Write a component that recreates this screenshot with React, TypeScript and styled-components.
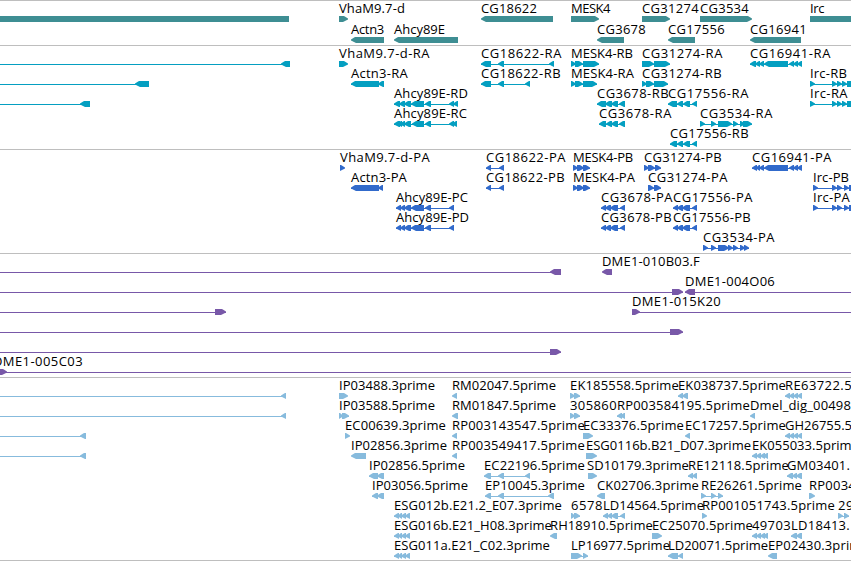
import { useLayoutEffect, useRef } from "react";
import styled, { createGlobalStyle } from "styled-components";

type Direction = "<" | ">" | "-";

interface Feature {
  name?: string;
  // left and right edge of the label
  label?: [number, number];
  dir: Direction;
  // "start-end" pairs, separated by spaces
  exons: string;
  // thin line that runs past the exons
  line?: [number, number];
}

interface TrackData {
  id: string;
  color: string;
  rowHeight: number;
  bottom: number;
  rows: Feature[][];
}

const WIDTH = 851;

const f = (
  name: string,
  start: number,
  end: number,
  dir: Direction,
  exons: string,
  line?: [number, number]
): Feature => ({ name, label: [start, end], dir, exons, line });

const bare = (
  dir: Direction,
  exons: string,
  line?: [number, number]
): Feature => ({ dir, exons, line });

const IRC_R = "810-815 832-837 837-842 842-847 847-856";
const IRC_P = "813-818 832-837 837-842 844-849 849-856";
const AHCY_P = "396-401 400-405 404-411 411-424 425-431 449-454";
const CG3678_P = "601-606 605-611 610-618 620-625";
const CG17556_P = "673-678 677-683 682-690 692-697";
const CG16941_TAIL = "764-788 789-794 793-798 797-802";
const ESG = "394-399 398-402 401-406 405-410";

const tracks: TrackData[] = [
  {
    id: "gene",
    color: "#3e8e93",
    rowHeight: 21,
    bottom: 2,
    rows: [
      [
        bare("-", "0-289"),
        f("VhaM9.7-d", 339, 405, ">", "339-348"),
        f("CG18622", 481, 537, "<", "481-553"),
        f("MESK4", 571, 610, ">", "571-599"),
        f("CG31274", 642, 699, ">", "642-670"),
        f("CG3534", 700, 749, ">", "700-752"),
        f("Irc", 810, 824, "-", "810-851"),
      ],
      [
        f("Actn3", 351, 384, "<", "351-384"),
        f("Ahcy89E", 394, 445, "<", "394-458"),
        f("CG3678", 597, 646, "<", "597-624"),
        f("CG17556", 668, 725, "<", "668-695"),
        f("CG16941", 750, 807, "<", "750-801"),
      ],
    ],
  },
  {
    id: "transcript",
    color: "#049fc1",
    rowHeight: 20,
    bottom: 3,
    rows: [
      [
        bare("<", "281-290", [0, 290]),
        f("VhaM9.7-d-RA", 339, 430, ">", "339-348"),
        f("CG18622-RA", 481, 562, "<", "481-491 498-504 549-554"),
        f("MESK4-RB", 571, 633, ">", "571-576 575-583 583-599"),
        f("CG31274-RA", 642, 723, ">", "642-654 654-670"),
        f("CG16941-RA", 750, 831, "<", `750-756 755-760 759-764 ${CG16941_TAIL}`),
      ],
      [
        bare("<", "135-149", [0, 149]),
        f("Actn3-RA", 351, 408, "<", "351-379 378-384"),
        f("CG18622-RB", 481, 561, "<", "481-491 498-504 525-530"),
        f("MESK4-RA", 571, 634, ">", "571-576 575-583 583-597"),
        f("CG31274-RB", 642, 722, ">", "642-647 646-654 654-668"),
        f("Irc-RB", 810, 847, ">", IRC_R),
      ],
      [
        bare("<", "80-90", [0, 90]),
        f("Ahcy89E-RD", 394, 468, "<", "394-400 399-405 404-411 411-424 425-431 449-454 453-458"),
        f("CG3678-RB", 597, 669, "<", "597-606 605-612 611-618 619-625"),
        f("CG17556-RA", 668, 749, "<", "668-677 677-683 683-690 692-697"),
        f("Irc-RA", 810, 848, ">", IRC_R),
      ],
      [
        f("Ahcy89E-RC", 394, 467, "<", "394-400 397-402 400-405 404-411 412-424 425-431 449-454 452-457"),
        f("CG3678-RA", 599, 672, "<", "599-606 606-612 611-618 619-625"),
        f("CG3534-RA", 700, 773, ">", "700-705 711-716 718-732 733-738 740-745 743-752"),
      ],
      [f("CG17556-RB", 670, 749, "<", "670-677 677-683 683-690 692-697")],
    ],
  },
  {
    id: "cds",
    color: "#316acb",
    rowHeight: 20,
    bottom: 3,
    rows: [
      [
        f("VhaM9.7-d-PA", 340, 430, ">", "340-345"),
        f("CG18622-PA", 486, 566, "<", "486-491 499-504"),
        f("MESK4-PB", 573, 633, ">", "573-578 577-584 583-590"),
        f("CG31274-PB", 644, 722, ">", "644-649 648-655 655-661"),
        f("CG16941-PA", 752, 832, "<", `752-757 756-760 759-764 ${CG16941_TAIL}`),
      ],
      [
        f("Actn3-PA", 351, 407, "<", "351-379 378-383"),
        f("CG18622-PB", 486, 565, "<", "486-491 499-504"),
        f("MESK4-PA", 573, 635, ">", "573-578 577-584 583-590"),
        f("CG31274-PA", 648, 728, ">", "648-654 654-661"),
        f("Irc-PB", 813, 849, ">", IRC_P),
      ],
      [
        f("Ahcy89E-PC", 396, 468, "<", AHCY_P),
        f("CG3678-PA", 601, 673, "<", CG3678_P),
        f("CG17556-PA", 673, 753, "<", CG17556_P),
        f("Irc-PA", 813, 850, ">", IRC_P),
      ],
      [
        f("Ahcy89E-PD", 396, 469, "<", AHCY_P),
        f("CG3678-PB", 601, 672, "<", CG3678_P),
        f("CG17556-PB", 673, 751, "<", CG17556_P),
      ],
      [f("CG3534-PA", 703, 775, ">", "703-708 711-716 718-729 728-733 733-738 740-745 744-749")],
    ],
  },
  {
    id: "bac",
    color: "#7858a8",
    rowHeight: 20,
    bottom: 3,
    rows: [
      [
        bare("<", "550-561", [0, 561]),
        f("DME1-010B03.F", 602, 700, "<", "602-612"),
      ],
      [
        bare(">", "672-683", [0, 683]),
        f("DME1-004O06", 685, 775, "<", "685-695", [685, WIDTH]),
      ],
      [
        bare(">", "215-226", [0, 226]),
        f("DME1-015K20", 632, 721, ">", "632-640", [632, WIDTH]),
      ],
      [bare(">", "670-683", [0, 683])],
      [bare(">", "550-561", [0, 561])],
      [f("DME1-005C03", -7, 83, ">", "-5-7", [0, WIDTH])],
    ],
  },
  {
    id: "est",
    color: "#87bbdd",
    rowHeight: 20,
    bottom: 2,
    rows: [
      [
        bare("<", "281-286", [0, 286]),
        f("IP03488.3prime", 339, 435, ">", "339-348"),
        f("RM02047.5prime", 452, 556, "<", "452-457"),
        f("EK185558.5prime", 570, 679, ">", "570-575 574-580"),
        f("EK038737.5prime", 678, 786, "<", "678-683 682-688"),
        f("RE63722.5", 785, 852, "<", "785-790 789-794 793-798 797-802"),
      ],
      [
        bare("<", "281-286", [0, 286]),
        f("IP03588.5prime", 339, 435, ">", "339-343 342-349"),
        f("RM01847.5prime", 452, 556, "<", "452-458"),
        f("305860", 570, 617, ">", "570-575 574-580"),
        f("RP003584195.5prime", 617, 750, "<", "617-622 620-625"),
        f("Dmel_dig_00498", 750, 851, "<", "750-755"),
      ],
      [
        bare("<", "80-86", [0, 86]),
        f("EC00639.3prime", 345, 446, ">", "345-350"),
        f("RP003143547.5prime", 452, 585, "<", "452-457"),
        f("EC33376.5prime", 583, 684, ">", "583-593"),
        f("EC17257.5prime", 685, 786, "<", "685-690"),
        f("GH26755.5", 785, 852, "<", "785-790 789-794 793-798 797-802"),
      ],
      [
        bare("<", "80-86", [0, 86]),
        f("IP02856.3prime", 351, 447, "<", "351-366"),
        f("RP003549417.5prime", 452, 585, "<", "452-457"),
        f("ESG0116b.B21_D07.3prime", 586, 751, ">", "586-597"),
        f("EK055033.5prime", 752, 859, "<", "752-757 756-761 760-765 763-768"),
      ],
      [
        f("IP02856.5prime", 369, 465, "<", "369-378 377-384"),
        f("EC22196.5prime", 484, 585, "<", "484-491 498-504 525-530"),
        f("SD10179.3prime", 587, 689, ">", "588-597"),
        f("RE12118.5prime", 688, 789, "<", "688-693 692-697"),
        f("GM03401.", 787, 850, "<", "787-793 792-797 796-802"),
      ],
      [
        f("IP03056.5prime", 372, 468, "<", "372-378 377-384"),
        f("EP10045.3prime", 485, 585, "<", "485-491 498-504 548-554"),
        f("CK02706.3prime", 597, 699, "<", "597-605"),
        f("RE26261.5prime", 701, 802, ">", "701-706 711-716 718-723"),
        f("RP0034", 809, 856, ">", "809-815"),
      ],
      [
        f("ESG012b.E21.2_E07.3prime", 394, 562, "<", ESG),
        f("6578", 571, 603, ">", "571-575 574-580"),
        f("LD14564.5prime", 603, 704, "<", "603-608 607-612 611-618 620-625"),
        f("RP001051743.5prime", 702, 835, ">", "702-707"),
        f("29", 838, 854, ">", "838-843 844-849"),
      ],
      [
        f("ESG016b.E21_H08.3prime", 394, 552, "<", ESG),
        f("RH18910.5prime", 550, 653, "<", "550-557"),
        f("EC25070.5prime", 652, 753, ">", "652-662"),
        f("49703", 752, 791, "<", "752-757 756-761 760-765 763-768"),
        f("LD18413.", 791, 850, "<", "791-797 796-802"),
      ],
      [
        f("ESG011a.E21_C02.3prime", 394, 550, "<", ESG),
        f("LP16977.5prime", 571, 670, ">", "571-582 583-588"),
        f("LD20071.5prime", 668, 768, "<", "668-678 678-683"),
        f("EP02430.3prime", 768, 869, "<", "768-777"),
      ],
    ],
  },
];

const GlobalStyle = createGlobalStyle`
  body {
    margin: 0;
    background: #fff;
    overflow: hidden;
  }
`;

const StyledBrowser = styled.main`
  width: ${WIDTH}px;
  height: 561px;
  overflow: hidden;
  border-bottom: 1px solid #bebebe;
  box-sizing: border-box;
  background: #fff;
`;

const StyledTrack = styled.section<{ $color: string; $bottom: number }>`
  border-top: 1px solid #bebebe;
  padding-bottom: ${({ $bottom }) => $bottom}px;
  color: ${({ $color }) => $color};
`;

const StyledRow = styled.div<{ $height: number }>`
  display: flex;
  flex-direction: column;
  height: ${({ $height }) => $height}px;
`;

const StyledLabels = styled.div`
  position: relative;
  flex: 0 0 15px;
`;

const StyledLabel = styled.span<{ $x: number }>`
  position: absolute;
  top: 0;
  left: ${({ $x }) => $x}px;
  font-family: "Open Sans", "Liberation Sans", sans-serif;
  font-size: 13px;
  line-height: 15px;
  font-kerning: none;
  color: #000;
  white-space: pre;
`;

const StyledGlyphs = styled.svg`
  display: block;
  flex: 0 0 6px;
  fill: currentColor;
  overflow: visible;
`;

const exonPoints = (start: number, end: number, dir: Direction) => {
  const tip = Math.min(5, end - start);
  if (dir === "<") {
    const neck = start + tip;
    return `${start},2.4 ${neck - 1},0 ${end},0 ${end},6 ${neck},6 ${start},3.4`;
  }
  if (dir === ">") {
    const neck = end - tip;
    return `${start},0 ${neck + 1},0 ${end},2.4 ${end},3.4 ${neck},6 ${start},6`;
  }
  return `${start},0 ${end},0 ${end},6 ${start},6`;
};

const parseExons = (exons: string) =>
  exons.split(" ").map((part) => {
    const [, start, end] = part.match(/^(-?\d+)-(\d+)$/)!;
    return [Number(start), Number(end)];
  });

const Glyph = ({ feature }: { feature: Feature }) => {
  const exons = parseExons(feature.exons);
  const [from, to] = feature.line ?? [exons[0][0], exons[exons.length - 1][1]];
  return (
    <g>
      {(feature.line || exons.length > 1) && (
        <rect x={from} y={3} width={to - from} height={1} />
      )}
      {exons.map(([start, end]) => (
        <polygon key={start} points={exonPoints(start, end, feature.dir)} />
      ))}
    </g>
  );
};

// Spreads the letters of a name over its slot on the row
const Label = ({ name, slot }: { name: string; slot: [number, number] }) => {
  const ref = useRef<HTMLSpanElement>(null);
  const [start, end] = slot;

  useLayoutEffect(() => {
    const el = ref.current;
    if (!el) return;
    el.style.letterSpacing = "0px";
    const natural = el.getBoundingClientRect().width;
    el.style.letterSpacing = `${(end - start - natural) / name.length}px`;
  }, [name, start, end]);

  return (
    <StyledLabel ref={ref} $x={start}>
      {name}
    </StyledLabel>
  );
};

const Track = ({ track }: { track: TrackData }) => (
  <StyledTrack $color={track.color} $bottom={track.bottom}>
    {track.rows.map((row, i) => (
      <StyledRow key={i} $height={track.rowHeight}>
        <StyledLabels>
          {row.map(
            ({ name, label }) =>
              name && label && <Label key={name} name={name} slot={label} />
          )}
        </StyledLabels>
        <StyledGlyphs width={WIDTH} height={6}>
          {row.map((feature, n) => (
            <Glyph key={n} feature={feature} />
          ))}
        </StyledGlyphs>
      </StyledRow>
    ))}
  </StyledTrack>
);

const App = () => {
  return (
    <>
      <GlobalStyle />
      <StyledBrowser>
        {tracks.map((track) => (
          <Track key={track.id} track={track} />
        ))}
      </StyledBrowser>
    </>
  );
};

export default App;
